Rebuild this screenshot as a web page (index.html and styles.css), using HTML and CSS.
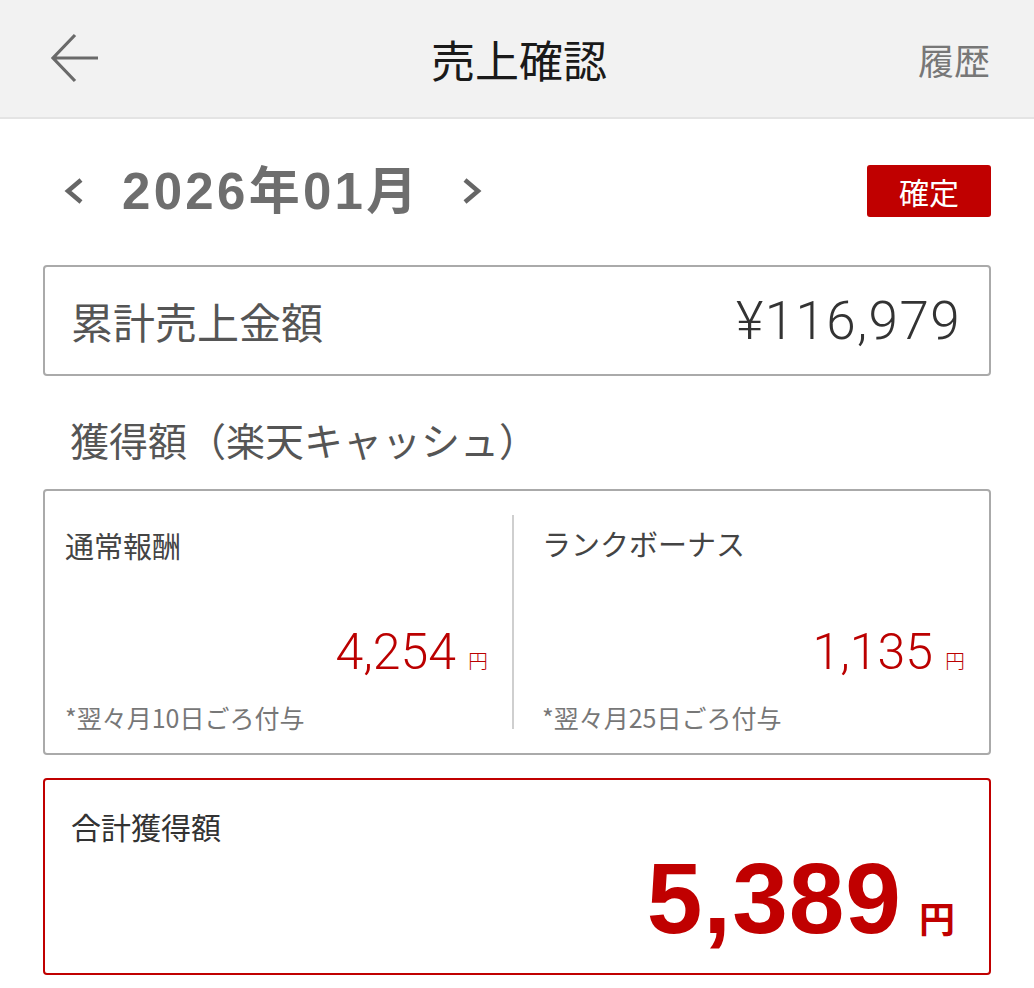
FILE: index.html
```html
<!DOCTYPE html>
<html lang="ja">
<head>
  <meta charset="UTF-8" />
  <meta name="viewport" content="width=device-width, initial-scale=1.0"/>
  <title>売上確認</title>
  <link rel="stylesheet" href="styles.css">
</head>
<body>

  <header class="topbar">
    <a class="back" href="#" aria-label="戻る">
      <svg width="50" height="50" viewBox="0 0 50 50">
        <path d="M25 2 L3 25 L25 48 M3 25 H48" fill="none" stroke="#6a6a6a" stroke-width="3.2"/>
      </svg>
    </a>
    <h1 class="title">売上確認</h1>
    <a class="history" href="#">履歴</a>
  </header>

  <main>
    <div class="month-row">
      <a class="chev prev" href="#" aria-label="前月">
        <svg width="22" height="28" viewBox="0 0 22 28">
          <path d="M18 3 L5 14 L18 25" fill="none" stroke="#666" stroke-width="4.5"/>
        </svg>
      </a>
      <span class="month">2026年01月</span>
      <a class="chev next" href="#" aria-label="翌月">
        <svg width="22" height="28" viewBox="0 0 22 28">
          <path d="M4 3 L17 14 L4 25" fill="none" stroke="#666" stroke-width="4.5"/>
        </svg>
      </a>
      <span class="badge">確定</span>
    </div>

    <div class="box total-sales">
      <span class="label">累計売上金額</span>
      <span class="sales">¥116,979</span>
    </div>

    <h2 class="section">獲得額（楽天キャッシュ）</h2>

    <div class="box split">
      <div class="col">
        <div class="col-label">通常報酬</div>
        <div class="amount">4,254<span class="yen">円</span></div>
        <div class="note">*翌々月10日ごろ付与</div>
      </div>
      <div class="col">
        <div class="col-label">ランクボーナス</div>
        <div class="amount">1,135<span class="yen">円</span></div>
        <div class="note">*翌々月25日ごろ付与</div>
      </div>
    </div>

    <div class="box grand">
      <div class="col-label">合計獲得額</div>
      <div class="grand-amount">5,389<span class="yen">円</span></div>
    </div>
  </main>

</body>
</html>
```

FILE: styles.css
```css
* { box-sizing: border-box; }
body {
  font-family: 'Liberation Sans', 'Noto Sans CJK JP', sans-serif;
  margin: 0;
  padding: 0;
  background: #fff;
  color: #444;
}
a {
  color: inherit;
  text-decoration: none;
}
.topbar {
  display: grid;
  grid-template-columns: 1fr auto 1fr;
  align-items: center;
  height: 119px;
  padding: 0 44px 0 50px;
  background: #f2f2f2;
  border-bottom: 2px solid #e4e4e4;
}
.back {
  display: flex;
  margin-top: -2px;
}
.title {
  margin: 0;
  font-family: 'Noto Sans CJK JP', sans-serif;
  font-size: 44px;
  font-weight: 400;
  color: #1a1a1a;
  margin-left: -2px;
}
.history {
  justify-self: end;
  font-family: 'Noto Sans CJK JP', sans-serif;
  font-size: 36px;
  color: #777;
}
main {
  padding: 0 43px;
}
.month-row {
  display: flex;
  align-items: center;
  height: 52px;
  margin-top: 46px;
}
.chev {
  display: flex;
}
.prev {
  margin-left: 20px;
}
.month {
  margin-left: 37px;
  font-size: 51px;
  font-weight: bold;
  letter-spacing: 3.3px;
  color: #6e6e6e;
  line-height: 1;
}
.next {
  margin-left: 40px;
}
.badge {
  margin-left: auto;
  width: 124px;
  height: 52px;
  display: flex;
  align-items: center;
  justify-content: center;
  background: #c00000;
  color: #fff;
  border-radius: 3px;
  font-family: 'Noto Sans CJK JP', sans-serif;
  font-size: 30px;
}
.box {
  border: 2px solid #aaa;
  border-radius: 4px;
}
.total-sales {
  margin-top: 48px;
  height: 111px;
  display: flex;
  align-items: center;
  justify-content: space-between;
  padding: 0 28px 0 26px;
}
.label {
  font-family: 'Noto Sans CJK JP', sans-serif;
  font-size: 42px;
  color: #555;
}
.sales {
  font-family: Roboto, 'Liberation Sans', sans-serif;
  font-size: 53px;
  font-weight: 300;
  letter-spacing: 1.4px;
  color: #333;
}
.section {
  margin: 40px 0 26px 27px;
  font-family: 'Noto Sans CJK JP', sans-serif;
  font-size: 39px;
  font-weight: 400;
  line-height: 1.2;
  color: #555;
}
.split {
  display: flex;
  padding: 24px 0;
  height: 266px;
}
.col {
  flex: 1;
  display: flex;
  flex-direction: column;
  padding: 12px 24px 0 20px;
}
.col + .col {
  border-left: 2px solid #cfcfcf;
  padding-left: 28px;
  padding-top: 10px;
}
.col-label {
  font-family: 'Noto Sans CJK JP', sans-serif;
  font-size: 29px;
  line-height: 36px;
  color: #444;
}
.amount {
  margin-top: 64px;
  text-align: right;
  font-family: Roboto, 'Liberation Sans', sans-serif;
  font-size: 50px;
  font-weight: 300;
  line-height: 1;
  color: #bb0000;
}
.col + .col .amount {
  margin-top: 66px;
}
.amount .yen {
  margin-left: 12px;
  font-family: 'Noto Sans CJK JP', sans-serif;
  font-size: 20px;
}
.note {
  margin-top: 25px;
  font-family: 'Noto Sans CJK JP', sans-serif;
  font-size: 25px;
  line-height: 30px;
  color: #777;
}
.grand {
  margin-top: 23px;
  height: 197px;
  border-color: #c00000;
  padding: 28px 34px 0 26px;
}
.grand .col-label {
  font-size: 30px;
  color: #333;
}
.grand-amount {
  margin-top: 4px;
  text-align: right;
  font-size: 100px;
  font-weight: bold;
  letter-spacing: 1px;
  line-height: 1;
  color: #c00000;
}
.grand-amount .yen {
  margin-left: 17px;
  font-family: 'Noto Sans CJK JP', sans-serif;
  font-size: 36px;
  letter-spacing: 0;
}
```
